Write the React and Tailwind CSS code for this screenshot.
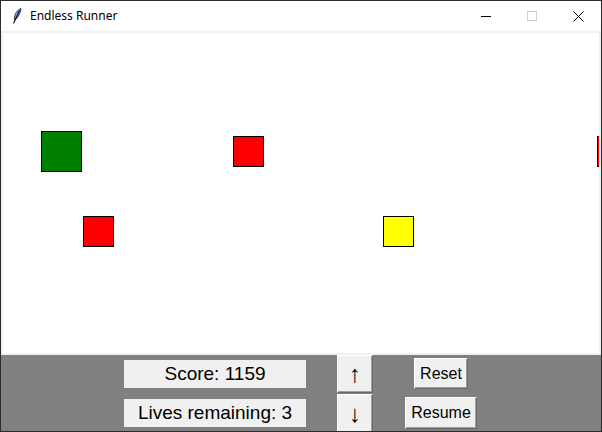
import React from 'react';

const font = { fontFamily: '"Liberation Sans", Arial, sans-serif' };

// game objects, coordinates inside the canvas
const shapes = [
  { id: 'player', left: 38, top: 98, size: 41, color: 'bg-[#008000]' },
  { id: 'red1', left: 80, top: 183, size: 31, color: 'bg-[#ff0000]' },
  { id: 'red2', left: 230, top: 103, size: 31, color: 'bg-[#ff0000]' },
  { id: 'yellow', left: 380, top: 183, size: 31, color: 'bg-[#ffff00]' },
  { id: 'red3', left: 594, top: 103, size: 31, color: 'bg-[#ff0000]' },
];

const Feather = () => (
  <svg width="10" height="16" viewBox="0 0 10 16">
    <path d="M9 0.5 C5 2 2.5 6 2.5 10.5 L2.5 12 L4 11 C6.5 8.5 8.5 5 9 0.5 Z" fill="#7fa3dd" stroke="#1d2b4a" strokeWidth="0.9" />
    <path d="M7.5 2.5 L1.5 15.5" stroke="#111" strokeWidth="1.1" />
  </svg>
);

const TkButton = ({ className, children }) => (
  <div
    className={`flex items-center justify-center bg-[#f0f0f0] border border-t-white border-l-white border-r-[#696969] border-b-[#696969] shadow-[inset_-1px_-1px_0_#a0a0a0] text-black ${className}`}
  >
    {children}
  </div>
);

export default function App() {
  return (
    <div className="w-[602px] h-[432px] border border-[#2b2b2b] bg-white flex flex-col overflow-hidden">
      {/* title bar */}
      <div className="h-[30px] flex items-center bg-white shrink-0">
        <div className="w-[29px] flex justify-center pl-[3px]">
          <Feather />
        </div>
        <span className="text-[12px] text-black" style={{ fontFamily: '"Noto Sans", "Liberation Sans", sans-serif' }}>
          Endless Runner
        </span>
        <div className="ml-auto flex items-center h-full">
          <div className="w-[46px] h-full flex items-center justify-center">
            <div className="w-[10px] h-px bg-black" />
          </div>
          <div className="w-[46px] h-full flex items-center justify-center">
            <div className="w-[10px] h-[10px] border border-[#cccccc]" />
          </div>
          <div className="w-[46px] h-full flex items-center justify-center">
            <svg width="11" height="11" viewBox="0 0 11 11">
              <path d="M0.5 0.5 L10.5 10.5 M10.5 0.5 L0.5 10.5" stroke="#000" strokeWidth="1" />
            </svg>
          </div>
        </div>
      </div>

      {/* canvas */}
      <div className="relative h-[324px] shrink-0 border-2 border-[#f0f0f0] bg-white overflow-hidden">
        {shapes.map((s) => (
          <div
            key={s.id}
            className={`absolute border border-black ${s.color}`}
            style={{ left: s.left, top: s.top, width: s.size, height: s.size }}
          />
        ))}
      </div>

      {/* controls */}
      <div className="flex-1 bg-[#808080] flex pl-[123px]" style={font}>
        <div className="w-[182px] flex flex-col gap-[11px] pt-[5px]">
          <div className="h-[28px] bg-[#f0f0f0] flex items-center justify-center text-[19px] text-black">
            Score: 1159
          </div>
          <div className="h-[28px] bg-[#f0f0f0] flex items-center justify-center text-[19px] text-black">
            Lives remaining: 3
          </div>
        </div>
        <div className="w-[36px] ml-[31px] flex flex-col gap-px pt-0">
          <TkButton className="h-[38px] text-[24px] leading-none">↑</TkButton>
          <TkButton className="h-[40px] text-[24px] leading-none">↓</TkButton>
        </div>
        <div className="w-[72px] ml-[32px] flex flex-col items-center gap-[8px] pt-[3px]">
          <TkButton className="w-[54px] h-[31px] text-[16px]">Reset</TkButton>
          <TkButton className="w-[72px] h-[32px] text-[16px]">Resume</TkButton>
        </div>
      </div>
    </div>
  );
}
